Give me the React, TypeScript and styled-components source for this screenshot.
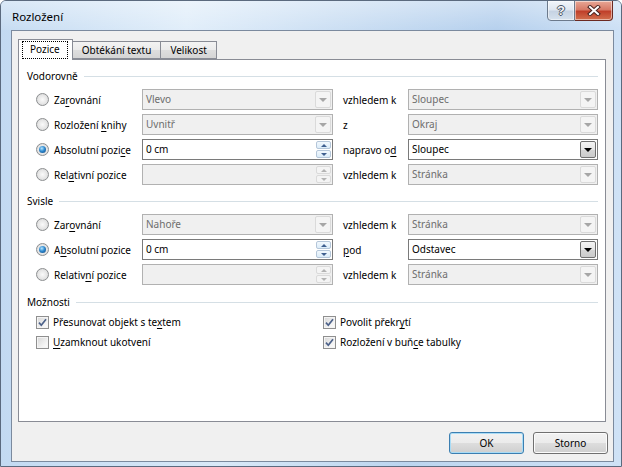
import styled, { createGlobalStyle } from 'styled-components'
import { ReactNode } from 'react'

const GlobalStyle = createGlobalStyle`
  html, body {
    margin: 0;
    padding: 0;
  }
  body {
    font-family: 'Noto Sans', 'Liberation Sans', sans-serif;
    font-size: 10px;
    color: #000;
  }
`

const Window = styled.div`
  width: 622px;
  height: 467px;
  box-sizing: border-box;
  display: flex;
  flex-direction: column;
  border: 1px solid #5b6a7e;
  border-radius: 6px 6px 0 0;
  background: linear-gradient(90deg, #c3daf2 0%, #d9e9f8 35%, #bcd5ef 65%, #cfe2f6 100%);
  overflow: hidden;
`

const TitleBar = styled.div`
  height: 29px;
  flex-shrink: 0;
  display: flex;
  align-items: flex-start;
  background: linear-gradient(180deg, rgba(255, 255, 255, 0.45) 0%, rgba(255, 255, 255, 0.15) 100%),
    linear-gradient(90deg, #bcd6f0 0%, #dcebf9 30%, #c2d9f1 55%, #a9c8ea 80%, #c4dbf3 100%);
`

const Title = styled.div`
  flex: 1;
  padding: 9px 0 0 11px;
  font-size: 11.5px;
  line-height: 14px;
`

const CaptionButtons = styled.div`
  display: flex;
  margin: -1px 8px 0 0;
`

const CaptionButton = styled.div<{ $close?: boolean }>`
  width: ${({ $close }) => ($close ? '38px' : '28px')};
  height: 21px;
  box-sizing: border-box;
  display: flex;
  align-items: center;
  justify-content: center;
  border: 1px solid ${({ $close }) => ($close ? '#6b2a22' : '#6c7a8c')};
  border-left-width: ${({ $close }) => ($close ? '0' : '1px')};
  border-radius: ${({ $close }) => ($close ? '0 0 4px 0' : '0 0 0 4px')};
  background: ${({ $close }) =>
    $close
      ? 'linear-gradient(180deg, #e8a796 0%, #d77a67 45%, #c0402a 55%, #d2704e 100%)'
      : 'linear-gradient(180deg, #f2f6fb 0%, #dfe7f1 45%, #c6d3e3 55%, #d6e2ee 100%)'};
  box-shadow: inset 0 0 0 1px rgba(255, 255, 255, 0.5);
  font-family: 'Liberation Sans', sans-serif;
  font-weight: bold;
  font-size: 13px;
  color: #f4f6f9;
  text-shadow: 1px 0 #4b5564, -1px 0 #4b5564, 0 1px #4b5564, 0 -1px #4b5564;
`

const Client = styled.div`
  flex: 1;
  margin: 0 7px 4px 10px;
  border: 1px solid #7b8a9e;
  background: #f0f0f0;
  display: flex;
  flex-direction: column;
  padding: 8px 5px 7px 6px;
  min-height: 0;
`

const TabStrip = styled.div`
  display: flex;
  align-items: flex-end;
  height: 20px;
`

const Tab = styled.div<{ $active?: boolean }>`
  box-sizing: border-box;
  height: ${({ $active }) => ($active ? '21px' : '18px')};
  margin-bottom: ${({ $active }) => ($active ? '-1px' : '0')};
  padding: ${({ $active }) => ($active ? '0 5px 0 4px' : '0 9px')};
  display: flex;
  align-items: ${({ $active }) => ($active ? 'flex-start' : 'center')};
  padding-top: ${({ $active }) => ($active ? '2px' : '0')};
  border: 1px solid #898c95;
  border-bottom: ${({ $active }) => ($active ? 'none' : '1px solid #898c95')};
  border-left-width: ${({ $active }) => ($active ? '1px' : '0')};
  background: ${({ $active }) =>
    $active ? '#fff' : 'linear-gradient(180deg, #f3f3f3 0%, #ebebeb 50%, #dedede 51%, #d5d5d5 100%)'};
  position: relative;
  z-index: ${({ $active }) => ($active ? 1 : 0)};
`

const FocusText = styled.span`
  outline: 1px dotted #000;
  outline-offset: 0;
  padding: 1px 7px 2px 7px;
  line-height: 13px;
`

const Panel = styled.div`
  flex: 1;
  margin-right: 2px;
  border: 1px solid #898c95;
  background: #fff;
  padding: 8px 7px 0 8px;
  display: flex;
  flex-direction: column;
  gap: 8px;
`

const Section = styled.div<{ $nudge?: number }>`
  display: flex;
  flex-direction: column;
  margin-top: ${({ $nudge }) => $nudge ?? 0}px;
`

const Heading = styled.div`
  display: flex;
  align-items: center;
  gap: 6px;
  height: 16px;
  &::after {
    content: '';
    flex: 1;
    height: 1px;
    background: #d5dfe5;
  }
`

const FieldGrid = styled.div`
  margin-top: 5px;
  padding-left: 9px;
  display: grid;
  grid-template-columns: 106px 191px 75px 190px;
  grid-auto-rows: 21px;
  row-gap: 4px;
  align-items: center;
`

const OptionLabel = styled.label`
  display: flex;
  align-items: center;
  gap: 5px;
  white-space: nowrap;
`

const Radio = styled.span<{ $checked?: boolean }>`
  width: 13px;
  height: 13px;
  box-sizing: border-box;
  border-radius: 50%;
  border: 1px solid #8c8e90;
  background: radial-gradient(circle at 50% 50%, #fafafa 0%, #e6e6e6 55%, #cfd0d1 100%);
  display: flex;
  align-items: center;
  justify-content: center;
  flex-shrink: 0;
  &::after {
    content: '';
    display: ${({ $checked }) => ($checked ? 'block' : 'none')};
    width: 7px;
    height: 7px;
    border-radius: 50%;
    background: radial-gradient(circle at 40% 35%, #b6e6ff 0%, #2f8ad0 45%, #0c437c 100%);
  }
`

const Accel = styled.u`
  text-decoration: underline;
  text-underline-offset: 2px;
`

const SideLabel = styled.span<{ $disabled?: boolean }>`
  padding-left: 10px;
  white-space: nowrap;
`

const Box = styled.div<{ $enabled?: boolean }>`
  height: 21px;
  box-sizing: border-box;
  display: flex;
  align-items: stretch;
  border: 1px solid ${({ $enabled }) => ($enabled ? '#7a7a7a' : '#b1b1b1')};
  background: ${({ $enabled }) => ($enabled ? '#fff' : '#f0f0f0')};
  color: ${({ $enabled }) => ($enabled ? '#000' : '#6d6d6d')};
`

const BoxValue = styled.span`
  flex: 1;
  padding-left: 3px;
  line-height: 19px;
  white-space: nowrap;
`

const DropButton = styled.span<{ $enabled?: boolean }>`
  width: 16px;
  margin: 1px;
  box-sizing: border-box;
  display: flex;
  align-items: center;
  justify-content: center;
  border: 1px solid ${({ $enabled }) => ($enabled ? '#707070' : '#dadada')};
  border-radius: 2px;
  background: ${({ $enabled }) =>
    $enabled ? 'linear-gradient(180deg, #f4f4f4 0%, #e6e6e6 50%, #d6d6d6 51%, #cbcbcb 100%)' : '#f4f4f4'};
  &::after {
    content: '';
    border-left: 4px solid transparent;
    border-right: 4px solid transparent;
    border-top: 4px solid ${({ $enabled }) => ($enabled ? '#000' : '#a6a6a6')};
  }
`

const SpinButtons = styled.span`
  width: 15px;
  margin: 1px;
  display: flex;
  flex-direction: column;
  gap: 1px;
`

const SpinHalf = styled.span<{ $enabled?: boolean; $down?: boolean }>`
  flex: 1;
  display: flex;
  align-items: center;
  justify-content: center;
  border: 1px solid ${({ $enabled }) => ($enabled ? '#b4c6d9' : '#dadada')};
  border-radius: 2px;
  background: ${({ $enabled }) => ($enabled ? 'linear-gradient(180deg, #f2f8fd 0%, #dbecf9 100%)' : '#f4f4f4')};
  &::after {
    content: '';
    border-left: 3px solid transparent;
    border-right: 3px solid transparent;
    ${({ $down, $enabled }) =>
      $down
        ? `border-top: 3px solid ${$enabled ? '#3e5f8f' : '#b3b3b3'};`
        : `border-bottom: 3px solid ${$enabled ? '#3e5f8f' : '#b3b3b3'};`}
  }
`

const CheckGrid = styled.div`
  margin-top: 4px;
  padding-left: 9px;
  display: grid;
  grid-template-columns: 287px 1fr;
  grid-auto-rows: 16px;
  row-gap: 4px;
  align-items: center;
`

const CheckLabel = styled.label`
  display: flex;
  align-items: center;
  gap: 4px;
  white-space: nowrap;
`

const CheckBox = styled.span`
  width: 13px;
  height: 13px;
  box-sizing: border-box;
  border: 1px solid #8f8f8f;
  background: linear-gradient(135deg, #d6d6d6 0%, #f4f4f4 70%, #fbfbfb 100%);
  box-shadow: inset 0 0 0 1px #f4f4f4;
  display: flex;
  align-items: center;
  justify-content: center;
  flex-shrink: 0;
`

const ButtonRow = styled.div`
  margin-top: 10px;
  display: flex;
  justify-content: flex-end;
  gap: 9px;
`

const PushButton = styled.button<{ $default?: boolean }>`
  width: 75px;
  height: 22px;
  box-sizing: border-box;
  padding: 0;
  font: inherit;
  color: #000;
  border: 1px solid ${({ $default }) => ($default ? '#3c7fb1' : '#707070')};
  border-radius: 3px;
  background: linear-gradient(180deg, #f2f2f2 0%, #ebebeb 50%, #dddddd 51%, #cfcfcf 100%);
  box-shadow: inset 0 0 0 1px ${({ $default }) => ($default ? '#a9dcf6' : '#fbfbfb')};
`

const Check = () => (
  <svg width="11" height="11" viewBox="0 0 11 11">
    <path d="M2 5.6 L4.3 8.2 L9 2.2" fill="none" stroke="#4c6189" strokeWidth="1.7" />
  </svg>
)

const CloseGlyph = () => (
  <svg width="14" height="11" viewBox="0 0 14 11">
    <path d="M3 2 L11 9 M11 2 L3 9" stroke="#4a2420" strokeWidth="4" strokeLinecap="square" />
    <path d="M3 2 L11 9 M11 2 L3 9" stroke="#fff" strokeWidth="2" strokeLinecap="square" />
  </svg>
)

const Combo = ({ value, enabled }: { value: string; enabled?: boolean }) => (
  <Box $enabled={enabled}>
    <BoxValue>{value}</BoxValue>
    <DropButton $enabled={enabled} />
  </Box>
)

const Spinner = ({ value, enabled }: { value: string; enabled?: boolean }) => (
  <Box $enabled={enabled}>
    <BoxValue>{value}</BoxValue>
    <SpinButtons>
      <SpinHalf $enabled={enabled} />
      <SpinHalf $enabled={enabled} $down />
    </SpinButtons>
  </Box>
)

const RadioOption = ({ checked, children }: { checked?: boolean; children: ReactNode }) => (
  <OptionLabel>
    <Radio $checked={checked} />
    <span>{children}</span>
  </OptionLabel>
)

const CheckOption = ({ checked, children }: { checked?: boolean; children: ReactNode }) => (
  <CheckLabel>
    <CheckBox>{checked ? <Check /> : null}</CheckBox>
    <span>{children}</span>
  </CheckLabel>
)

const App = (): JSX.Element => {
  return (
    <>
      <GlobalStyle />
      <Window>
        <TitleBar>
          <Title>Rozložení</Title>
          <CaptionButtons>
            <CaptionButton>?</CaptionButton>
            <CaptionButton $close>
              <CloseGlyph />
            </CaptionButton>
          </CaptionButtons>
        </TitleBar>
        <Client>
          <TabStrip>
            <Tab $active>
              <FocusText>Pozice</FocusText>
            </Tab>
            <Tab>Obtékání textu</Tab>
            <Tab>Velikost</Tab>
          </TabStrip>
          <Panel>
            <Section>
              <Heading>Vodorovně</Heading>
              <FieldGrid>
                <RadioOption>Za<Accel>r</Accel>ovnání</RadioOption>
                <Combo value="Vlevo" />
                <SideLabel>vzhledem k</SideLabel>
                <Combo value="Sloupec" />

                <RadioOption>Rozložení <Accel>k</Accel>nihy</RadioOption>
                <Combo value="Uvnitř" />
                <SideLabel>z</SideLabel>
                <Combo value="Okraj" />

                <RadioOption checked>Absolutní pozi<Accel>c</Accel>e</RadioOption>
                <Spinner value="0 cm" enabled />
                <SideLabel>napravo o<Accel>d</Accel></SideLabel>
                <Combo value="Sloupec" enabled />

                <RadioOption>Rel<Accel>a</Accel>tivní pozice</RadioOption>
                <Spinner value="" />
                <SideLabel>vzhledem k</SideLabel>
                <Combo value="Stránka" />
              </FieldGrid>
            </Section>

            <Section>
              <Heading>Svisle</Heading>
              <FieldGrid>
                <RadioOption>Zar<Accel>o</Accel>vnání</RadioOption>
                <Combo value="Nahoře" />
                <SideLabel>vzhledem k</SideLabel>
                <Combo value="Stránka" />

                <RadioOption checked>A<Accel>b</Accel>solutní pozice</RadioOption>
                <Spinner value="0 cm" enabled />
                <SideLabel><Accel>p</Accel>od</SideLabel>
                <Combo value="Odstavec" enabled />

                <RadioOption>Relativ<Accel>n</Accel>í pozice</RadioOption>
                <Spinner value="" />
                <SideLabel>vzhledem k</SideLabel>
                <Combo value="Stránka" />
              </FieldGrid>
            </Section>

            <Section $nudge={1}>
              <Heading>Možnosti</Heading>
              <CheckGrid>
                <CheckOption checked>Přesunovat objekt s te<Accel>x</Accel>tem</CheckOption>
                <CheckOption checked>Povolit překr<Accel>y</Accel>tí</CheckOption>
                <CheckOption><Accel>U</Accel>zamknout ukotvení</CheckOption>
                <CheckOption checked>Rozložení v buň<Accel>c</Accel>e tabulky</CheckOption>
              </CheckGrid>
            </Section>
          </Panel>
          <ButtonRow>
            <PushButton $default>OK</PushButton>
            <PushButton>Storno</PushButton>
          </ButtonRow>
        </Client>
      </Window>
    </>
  )
}

export default App
